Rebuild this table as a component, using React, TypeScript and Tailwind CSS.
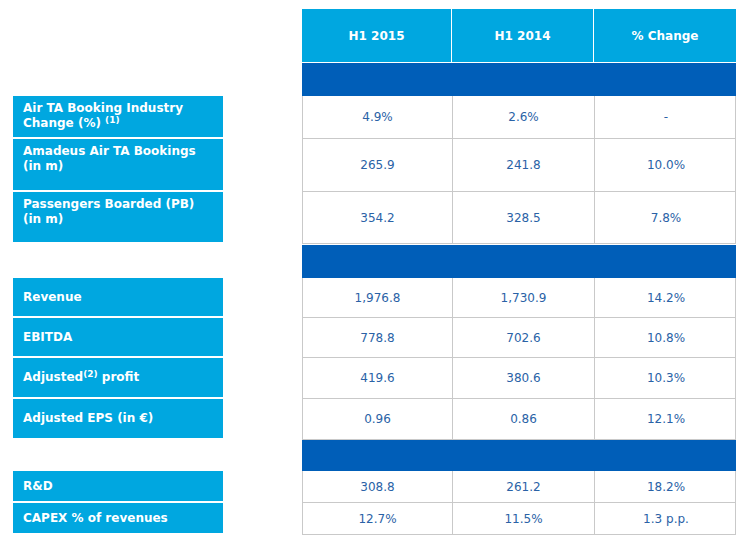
import React from "react";

type Row = {
  label?: React.ReactNode;
  values: string[];
  h: number;
  multi?: boolean;
};

const LIGHT = "bg-[#00a7e0]";
const DARK = "bg-[#005eb8]";

function Label({ children, multi }: { children: React.ReactNode; multi?: boolean }) {
  return (
    <div
      className={`w-[210px] h-full ${LIGHT} border-b-2 border-white px-[10px] text-white font-bold text-[12px] leading-[15px] flex ${
        multi ? "items-start pt-[5px]" : "items-center"
      }`}
    >
      <div>{children}</div>
    </div>
  );
}

function ValueRow({ row }: { row: Row }) {
  return (
    <div className="flex" style={{ height: row.h }}>
      <div className="ml-[13px] w-[210px] h-full">
        {row.label && <Label multi={row.multi}>{row.label}</Label>}
      </div>
      <div className="ml-[79px] w-[434px] h-full grid grid-cols-[150px_142px_142px] border-x border-b border-[#c9c9c9] divide-x divide-[#c9c9c9] bg-white">
        {row.values.map((v, i) => (
          <div key={i} className="flex items-center justify-center text-[12px] text-[#2a62a6]">
            {v}
          </div>
        ))}
      </div>
    </div>
  );
}

function Band({ h }: { h: number }) {
  return (
    <div className="flex" style={{ height: h }}>
      <div className="ml-[13px] w-[210px]" />
      <div className={`ml-[79px] w-[434px] h-full ${DARK}`} />
    </div>
  );
}

// footnote marker, raised to cap height
const Sup = ({ n }: { n: number }) => (
  <span className="text-[9px] font-bold leading-none relative -top-[4px]">({n})</span>
);

const section1: Row[] = [
  {
    label: (
      <>
        Air TA Booking Industry
        <br />
        Change (%) <Sup n={1} />
      </>
    ),
    values: ["4.9%", "2.6%", "-"],
    h: 43,
    multi: true,
  },
  {
    label: (
      <>
        Amadeus Air TA Bookings
        <br />
        (in m)
      </>
    ),
    values: ["265.9", "241.8", "10.0%"],
    h: 53,
    multi: true,
  },
  {
    label: (
      <>
        Passengers Boarded (PB)
        <br />
        (in m)
      </>
    ),
    values: ["354.2", "328.5", "7.8%"],
    h: 52,
    multi: true,
  },
];

const section2: Row[] = [
  { label: "Revenue", values: ["1,976.8", "1,730.9", "14.2%"], h: 40 },
  { label: "EBITDA", values: ["778.8", "702.6", "10.8%"], h: 40 },
  {
    label: (
      <>
        Adjusted<Sup n={2} /> profit
      </>
    ),
    values: ["419.6", "380.6", "10.3%"],
    h: 41,
  },
  { label: "Adjusted EPS (in €)", values: ["0.96", "0.86", "12.1%"], h: 41 },
];

const section3: Row[] = [
  { label: "R&D", values: ["308.8", "261.2", "18.2%"], h: 32 },
  { label: "CAPEX % of revenues", values: ["12.7%", "11.5%", "1.3 p.p."], h: 32 },
];

export default function App() {
  return (
    <div className="w-[742px] h-[543px] bg-white pt-[9px] font-['DejaVu_Sans',Verdana,sans-serif] flex flex-col">
      {/* Header */}
      <div className="flex h-[53px]">
        <div className="ml-[13px] w-[210px]" />
        <div className={`ml-[79px] w-[434px] h-full grid grid-cols-[150px_142px_142px] divide-x divide-white ${LIGHT}`}>
          {["H1 2015", "H1 2014", "% Change"].map((h) => (
            <div key={h} className="flex items-center justify-center text-white font-bold text-[12px]">
              {h}
            </div>
          ))}
        </div>
      </div>
      <div className="h-px" />
      <Band h={33} />
      {section1.map((r, i) => (
        <ValueRow key={i} row={r} />
      ))}
      <div className="h-px" />
      <Band h={33} />
      {section2.map((r, i) => (
        <ValueRow key={i} row={r} />
      ))}
      <Band h={31} />
      {section3.map((r, i) => (
        <ValueRow key={i} row={r} />
      ))}
    </div>
  );
}
